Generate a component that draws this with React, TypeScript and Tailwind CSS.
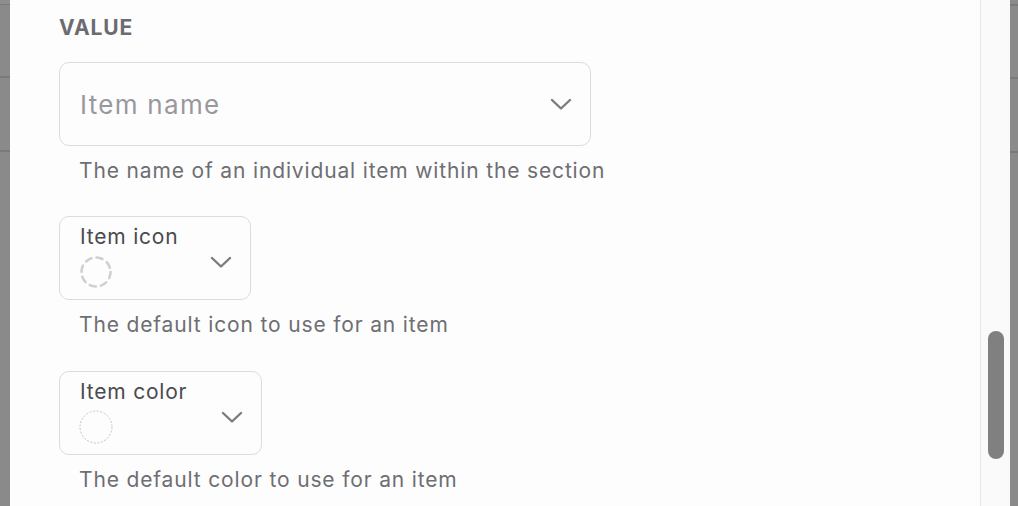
import React from "react";

const Chevron: React.FC = () => (
    <svg width="22" height="12" viewBox="0 0 22 12" fill="none">
        <path d="M2 2l9 8.5L20 2" stroke="#7b7b80" strokeWidth="2.4" strokeLinecap="round" strokeLinejoin="round" />
    </svg>
);

const DashedCircle: React.FC = () => (
    <svg width="34" height="34" viewBox="0 0 34 34" fill="none">
        <circle cx="17" cy="17" r="14.5" stroke="#cfcfd4" strokeWidth="2.6" strokeDasharray="6.2 5.2" strokeLinecap="round" />
    </svg>
);

const DottedCircle: React.FC = () => (
    <svg width="34" height="34" viewBox="0 0 34 34" fill="none">
        <circle cx="17" cy="17" r="16" stroke="#c4c4c9" strokeWidth="1" strokeDasharray="2 1.6" />
    </svg>
);

const Hint: React.FC<{ children: React.ReactNode }> = ({ children }) => (
    <p className="mt-[11px] pl-[20px] text-[21px] leading-[28px] tracking-[0.85px] text-[#6e6e73]">{children}</p>
);

const PickerBox: React.FC<{ label: string; width: string; icon: React.ReactNode }> = ({ label, width, icon }) => (
    <div className={`${width} h-[84px] rounded-[10px] border-[1.5px] border-[#dcdcde] pl-[20px] pr-[18px] pt-[7px] flex items-start justify-between`}>
        <div className="flex flex-col gap-[5px]">
            <span className="text-[21px] leading-[26px] tracking-[0.8px] text-[#4a4a4f]">{label}</span>
            <div className="-ml-[1px]">{icon}</div>
        </div>
        <div className="mt-[32px]">
            <Chevron />
        </div>
    </div>
);

export default function App() {
    return (
        <div className="w-[1018px] h-[506px] flex overflow-hidden bg-white" style={{ fontFamily: "Inter, 'Noto Sans', sans-serif" }}>
            {/* left edge */}
            <div className="w-[10px] h-full bg-[#8a8a8a] flex flex-col">
                <div className="h-[5px] bg-[#8e8e8e] border-b border-[#7a7a7a]" />
                <div className="h-[73px] border-b-2 border-[#7a7a7a]" />
                <div className="h-[74px] border-b-2 border-[#7a7a7a]" />
            </div>

            {/* panel */}
            <div className="flex-1 bg-[#fdfdfd] border-r border-[#e6e6e6] pl-[49px] pt-[14px]">
                <h3 className="text-[21px] leading-[28px] font-bold tracking-[0.9px] text-[#6b6b70]">VALUE</h3>

                <div className="mt-[20px] w-[532px] h-[84px] rounded-[10px] border-[1.5px] border-[#dcdcde] pl-[20px] pr-[18px] flex items-center justify-between">
                    <span className="text-[26px] tracking-[1.3px] text-[#98989e]">Item name</span>
                    <Chevron />
                </div>
                <Hint>The name of an individual item within the section</Hint>

                <div className="mt-[31px]">
                    <PickerBox label="Item icon" width="w-[192px]" icon={<DashedCircle />} />
                </div>
                <Hint>The default icon to use for an item</Hint>

                <div className="mt-[32px]">
                    <PickerBox label="Item color" width="w-[203px]" icon={<DottedCircle />} />
                </div>
                <Hint>The default color to use for an item</Hint>
            </div>

            {/* scrollbar */}
            <div className="w-[29px] h-full bg-[#fafafa] relative">
                <div className="absolute left-[7px] top-[331px] w-[16px] h-[128px] rounded-full bg-[#808080]" />
            </div>

            {/* right edge */}
            <div className="w-[8px] h-full bg-[#8a8a8a] flex flex-col">
                <div className="h-[6px] border-b-2 border-[#7a7a7a]" />
                <div className="h-[73px] border-b-2 border-[#7a7a7a]" />
                <div className="h-[74px] border-b-2 border-[#7a7a7a]" />
            </div>
        </div>
    );
}
